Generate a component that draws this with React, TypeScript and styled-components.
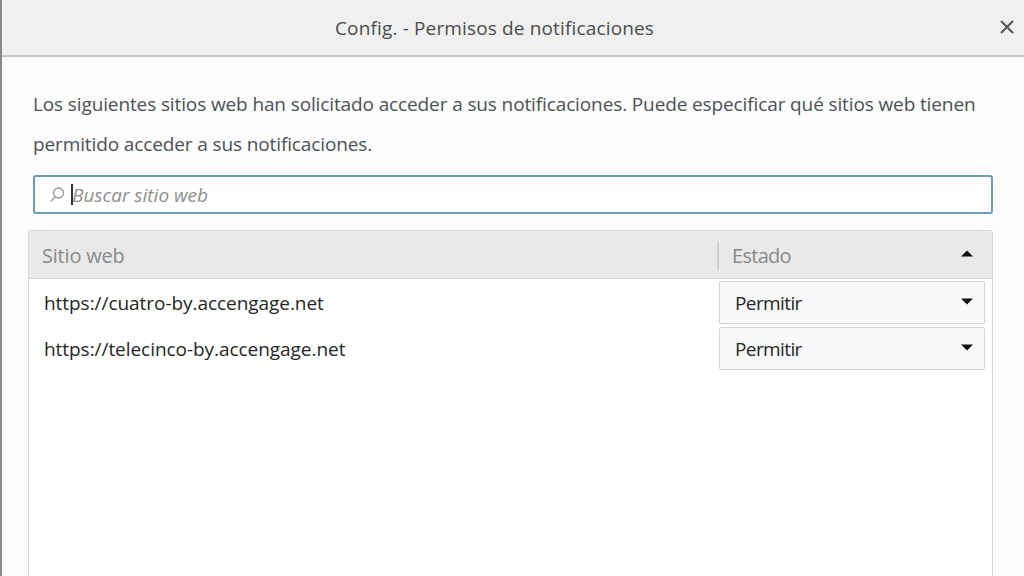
import styled, { createGlobalStyle } from "styled-components";

const sites = ["https://cuatro-by.accengage.net", "https://telecinco-by.accengage.net"];

const GlobalStyle = createGlobalStyle`
    html, body {
        margin: 0;
        height: 576px;
        overflow: hidden;
        background: #fcfcfc;
    }
    * {
        box-sizing: border-box;
    }
`

const Triangle = ({ up }: { up?: boolean }) => (
    <svg width="14" height="7" viewBox="0 0 14 7">
        <path d={up ? "M1 6.5 L7 0.5 L13 6.5 Z" : "M1 0.5 L13 0.5 L7 6.5 Z"} fill="#111" />
    </svg>
)

export default function App() {
    return (
        <>
            <GlobalStyle />
            <Dialog>
                <TitleBar>
                    <Title>Config. - Permisos de notificaciones</Title>
                    <CloseButton aria-label="Cerrar">
                        <svg width="14" height="14" viewBox="0 0 14 14">
                            <path d="M1 1 L13 13 M13 1 L1 13" stroke="#555" strokeWidth="2" fill="none" />
                        </svg>
                    </CloseButton>
                </TitleBar>
                <Content>
                    <Intro>
                        Los siguientes sitios web han solicitado acceder a sus notificaciones. Puede especificar qué sitios web tienen permitido acceder a sus notificaciones.
                    </Intro>
                    <SearchBox>
                        <svg width="18" height="18" viewBox="0 0 18 18">
                            <circle cx="10.5" cy="7" r="5" stroke="#999" strokeWidth="1.4" fill="none" />
                            <path d="M7 11 L2.5 15.5" stroke="#999" strokeWidth="1.4" fill="none" />
                        </svg>
                        <Caret />
                        <SearchInput readOnly placeholder="Buscar sitio web" />
                    </SearchBox>
                    <Table>
                        <TableHead>
                            <SiteHeading>Sitio web</SiteHeading>
                            <StateHeading>
                                Estado
                                <Triangle up />
                            </StateHeading>
                        </TableHead>
                        <Rows>
                            {sites.map((site) => (
                                <Row key={site}>
                                    <SiteName>{site}</SiteName>
                                    <StateSelect>
                                        Permitir
                                        <Triangle />
                                    </StateSelect>
                                </Row>
                            ))}
                        </Rows>
                    </Table>
                </Content>
            </Dialog>
        </>
    )
}

const Dialog = styled.div`
    display: flex;
    flex-direction: column;
    width: 1024px;
    height: 576px;
    overflow: hidden;
    border-left: 2px solid #8a8a8a;
    background: #fcfcfc;
    font-family: "Open Sans", "Noto Sans", sans-serif;
`

const TitleBar = styled.header`
    display: flex;
    align-items: center;
    justify-content: center;
    position: relative;
    flex: none;
    height: 57px;
    padding-right: 37px;
    background: #f0f0f0;
    border-bottom: 2px solid #c6c6c6;
`

const Title = styled.h1`
    margin: 0;
    font-size: 19px;
    font-weight: 400;
    letter-spacing: 0.15px;
    color: #4c4c4c;
`

const CloseButton = styled.button`
    display: flex;
    position: absolute;
    top: 20px;
    right: 10px;
    padding: 0;
    border: none;
    background: none;
`

const Content = styled.main`
    display: flex;
    flex-direction: column;
    flex: 1;
    min-height: 0;
    padding: 27px 31px 0 26px;
`

const Intro = styled.p`
    margin: 0 0 11px 5px;
    font-size: 19px;
    line-height: 40px;
    letter-spacing: -0.12px;
    color: #4d5156;
`

const SearchBox = styled.div`
    display: flex;
    align-items: center;
    flex: none;
    height: 39px;
    margin-left: 5px;
    padding-left: 13px;
    background: #fff;
    border: 2px solid #6b9cb8;
    border-radius: 3px;
`

const Caret = styled.span`
    flex: none;
    width: 2px;
    height: 21px;
    margin-left: 5px;
    background: #333;
`

const SearchInput = styled.input`
    flex: 1;
    min-width: 0;
    padding: 0;
    margin-left: -1px;
    border: none;
    outline: none;
    background: none;
    font-family: inherit;
    font-size: 19px;
    font-style: italic;

    &::placeholder {
        color: #8f8f8f;
        opacity: 1;
    }
`

const Table = styled.section`
    display: flex;
    flex-direction: column;
    flex: 1;
    margin-top: 16px;
    border: 1px solid #d8d8d8;
    border-bottom: none;
    border-radius: 3px 3px 0 0;
    background: #fff;
`

const TableHead = styled.div`
    display: flex;
    align-items: center;
    flex: none;
    height: 48px;
    padding-top: 2px;
    background: #e9e9e9;
    border-bottom: 1px solid #d8d8d8;
    font-size: 20px;
    letter-spacing: -0.2px;
    color: #8a8a8a;
`

const SiteHeading = styled.div`
    flex: 1;
    padding-left: 13px;
`

const StateHeading = styled.div`
    display: flex;
    align-items: center;
    justify-content: space-between;
    flex: none;
    width: 275px;
    height: 30px;
    padding: 0 18px 0 13px;
    border-left: 2px solid #cfcfcf;
    letter-spacing: -0.7px;

    svg {
        margin-top: -4px;
    }
`

const Rows = styled.div`
    display: flex;
    flex-direction: column;
    gap: 3px;
    padding: 2px 7px 0 15px;
`

const Row = styled.div`
    display: flex;
    align-items: center;
    justify-content: space-between;
    font-size: 19px;
    letter-spacing: -0.05px;
    color: #262626;
`

const SiteName = styled.span`
    white-space: nowrap;
`

const StateSelect = styled.div`
    display: flex;
    align-items: center;
    justify-content: space-between;
    width: 266px;
    height: 43px;
    padding: 0 10px 0 15px;
    background: #f9f9fb;
    border: 1px solid #d4d4d4;
    border-radius: 2px;
    letter-spacing: -0.6px;

    svg {
        margin-top: -2px;
    }
`
